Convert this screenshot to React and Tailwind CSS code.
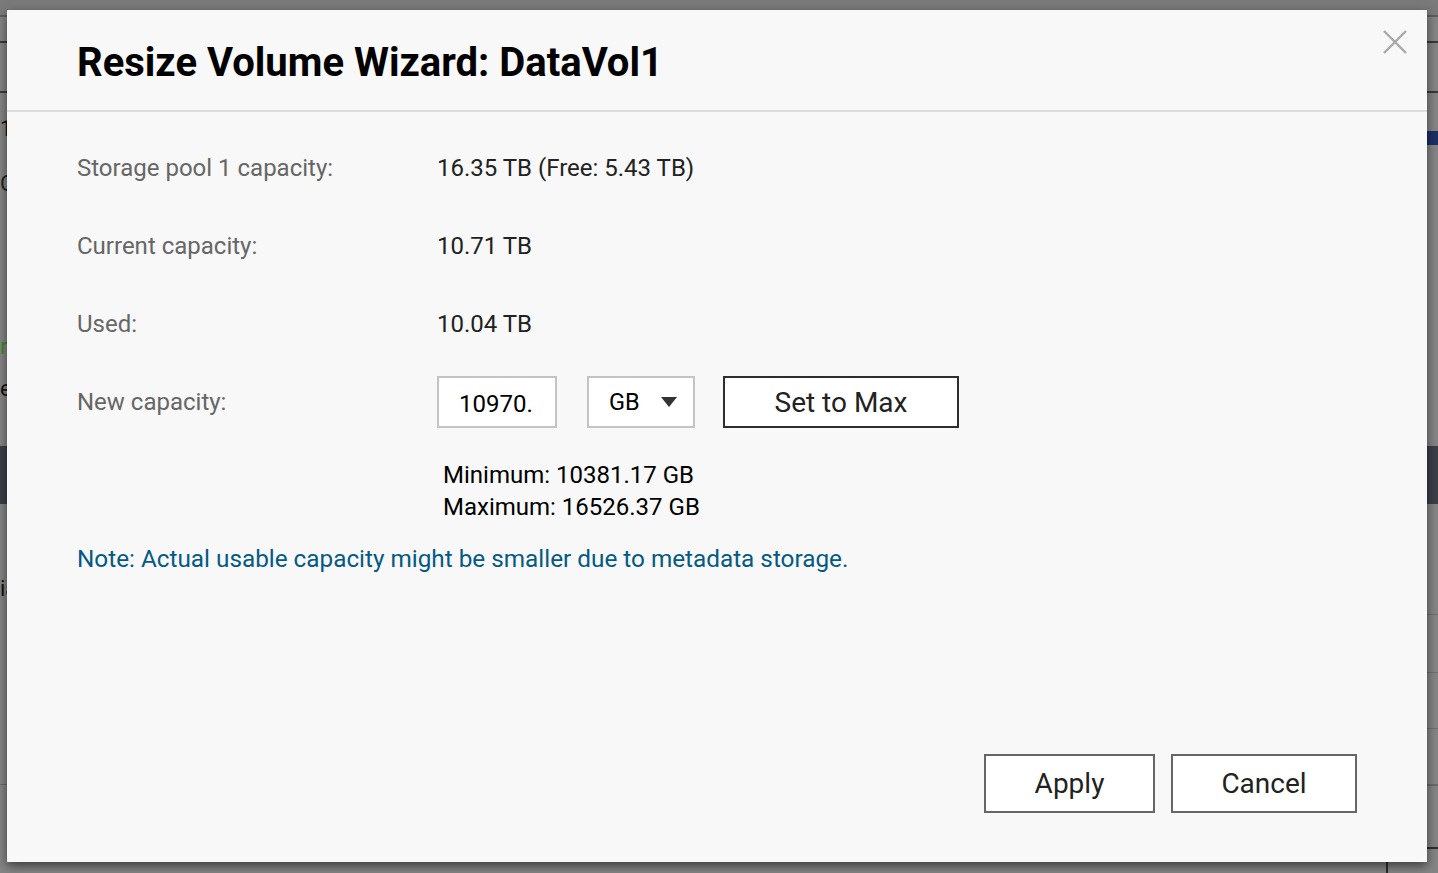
import React from "react";

function CloseIcon() {
  return (
    <svg width="24" height="24" viewBox="0 0 24 24" className="block">
      <path d="M1 1 L23 23 M23 1 L1 23" stroke="#a8a8a8" strokeWidth="2.4" fill="none" />
    </svg>
  );
}

function Row({ label, children }) {
  return (
    <div className="flex h-[78px] items-center">
      <div className="w-[360px] shrink-0 text-[24px] text-[#666666]">{label}</div>
      <div className="flex items-center text-[24px] text-[#222222]">{children}</div>
    </div>
  );
}

// Underlying page rows, mostly covered by the modal
function BackgroundPage() {
  return (
    <div className="flex h-full w-full flex-col bg-[#858585]">
      <div className="h-[17px] border-b-2 border-[#5e5e5e] bg-[#7a7a7a]" />
      <div className="h-[26px] border-b-2 border-[#3a3a3a]" />
      <div className="h-[50px] border-b-2 border-[#3a3a3a]" />
      <div className="flex h-[52px] items-end justify-end">
        <div className="h-[14px] w-[14px] bg-[#1c2f66]" />
      </div>
      <div className="flex-1" />
    </div>
  );
}

export default function App() {
  return (
    <div
      className="relative h-[873px] w-full overflow-hidden"
      style={{ fontFamily: "Roboto, 'Noto Sans', 'Liberation Sans', sans-serif" }}
    >
      <BackgroundPage />

      {/* fragments of the page behind the modal, mostly hidden under it */}
      <div className="absolute left-0 top-[118px] text-[22px] leading-none text-[#111]">1 TB</div>
      <div className="absolute left-0 top-[173px] text-[22px] leading-none text-[#222]">Clear</div>
      <div className="absolute left-0 top-[336px] text-[22px] leading-none text-[#3f8a2a]">ready</div>
      <div className="absolute left-0 top-[378px] text-[22px] leading-none text-[#111]">e</div>
      <div className="absolute left-0 top-[446px] h-[58px] w-[8px] bg-[#3b3f47]" />
      <div className="absolute left-0 top-[578px] text-[22px] leading-none text-[#111]">ia</div>
      <div className="absolute right-0 top-[446px] h-[58px] w-[12px] bg-[#3b3f47]" />
      <div className="absolute right-0 top-[614px] h-[1px] w-[12px] bg-[#707070]" />
      <div className="absolute right-0 top-[672px] h-[1px] w-[12px] bg-[#707070]" />
      <div className="absolute right-0 top-[728px] h-[1px] w-[12px] bg-[#707070]" />
      <div className="absolute right-0 top-[784px] h-[2px] w-[12px] bg-[#6a6a6a]" />
      <div className="absolute right-0 top-[847px] h-[2px] w-[12px] bg-[#2e2e2e]" />
      <div className="absolute left-[1386px] top-[860px] h-[14px] w-[2px] bg-[#2e2e2e]" />
      <div className="absolute left-0 top-[784px] h-[1px] w-[8px] bg-[#6a6a6a]" />

      {/* modal */}
      <div className="absolute left-[7px] top-[10px] flex h-[852px] w-[1420px] flex-col bg-[#f8f8f8] shadow-[0_4px_10px_rgba(0,0,0,0.55)]">
        <div className="relative flex h-[102px] shrink-0 items-center border-b-2 border-[#dcdcdc] pl-[70px] pt-[5px]">
          <h1 className="text-[40px] font-bold leading-none text-black">
            Resize Volume Wizard: DataVol1
          </h1>
          <button className="absolute right-[20px] top-[20px]">
            <CloseIcon />
          </button>
        </div>

        <div className="flex flex-1 flex-col pl-[70px] pt-[17px]">
          <Row label="Storage pool 1 capacity:">16.35 TB (Free: 5.43 TB)</Row>
          <Row label="Current capacity:">10.71 TB</Row>
          <Row label="Used:">10.04 TB</Row>
          <Row label="New capacity:">
            <div className="flex h-[52px] w-[120px] items-center overflow-hidden border-2 border-[#c4c4c4] bg-white pl-[20px] pt-[3px] text-[24px] text-black">
              10970.
            </div>
            <div className="ml-[30px] flex h-[52px] w-[108px] items-center justify-between border-2 border-[#c4c4c4] bg-white pl-[20px] pr-[16px] text-[23.5px] text-black">
              <span className="pt-[2px]">GB</span>
              <svg width="16" height="10" viewBox="0 0 16 10">
                <path d="M0 0 L16 0 L8 10 Z" fill="#333" />
              </svg>
            </div>
            <button className="ml-[28px] flex h-[52px] w-[236px] items-center justify-center border-2 border-[#2e2e2e] bg-white pt-[1px] text-[28px] text-[#222]">
              Set to Max
            </button>
          </Row>

          <div className="ml-[366px] mt-[18px] text-[24px] leading-[32px] text-black">
            <div>Minimum: 10381.17 GB</div>
            <div>Maximum: 16526.37 GB</div>
          </div>

          <div className="mt-[20px] text-[24.3px] leading-[32px] text-[#045a85]">
            Note: Actual usable capacity might be smaller due to metadata storage.
          </div>

          <div className="mt-auto mb-[49px] flex justify-end gap-[16px] pr-[70px]">
            <button className="flex h-[59px] w-[171px] items-center justify-center border-2 border-[#666] bg-white text-[28px] text-[#222]">
              Apply
            </button>
            <button className="flex h-[59px] w-[186px] items-center justify-center border-2 border-[#666] bg-white text-[28px] text-[#222]">
              Cancel
            </button>
          </div>
        </div>
      </div>
    </div>
  );
}
